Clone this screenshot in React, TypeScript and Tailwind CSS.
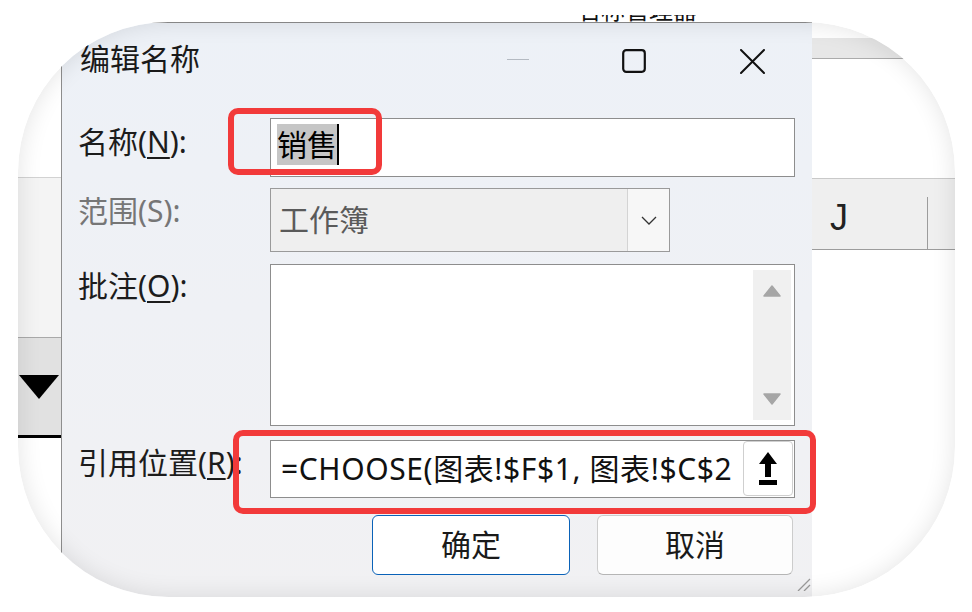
import React from "react";

function MaxIcon() {
  return (
    <svg width="24" height="24" viewBox="0 0 24 24" fill="none">
      <rect x="1.2" y="1.2" width="21.6" height="21.6" rx="3" stroke="#111" strokeWidth="2.2" />
    </svg>
  );
}

function CloseIcon() {
  return (
    <svg width="25" height="25" viewBox="0 0 25 25" fill="none">
      <path d="M1 1L24 24M24 1L1 24" stroke="#111" strokeWidth="2" strokeLinecap="round" />
    </svg>
  );
}

function Chevron() {
  return (
    <svg width="16" height="9" viewBox="0 0 16 9" fill="none">
      <path d="M1 1L8 8L15 1" stroke="#333" strokeWidth="1.3" />
    </svg>
  );
}

function Tri({ up }: { up?: boolean }) {
  return (
    <svg width="18" height="12" viewBox="0 0 18 12">
      {up ? (
        <path d="M9 1L17 11H1Z" fill="#a6a6a6" stroke="#a6a6a6" strokeLinejoin="round" strokeWidth="1.5" />
      ) : (
        <path d="M1 1H17L9 11Z" fill="#a6a6a6" stroke="#a6a6a6" strokeLinejoin="round" strokeWidth="1.5" />
      )}
    </svg>
  );
}

function UploadIcon() {
  return (
    <svg width="20" height="34" viewBox="0 0 20 34">
      <path d="M10 0L19 12H13V25H7V12H1Z" fill="#000" />
      <rect x="1" y="28" width="18" height="5" fill="#000" />
    </svg>
  );
}

function LeftStrip() {
  return (
    <div className="w-[43px] shrink-0 flex flex-col">
      <div className="h-[156px] bg-white border-b border-[#d2d2d2]" />
      <div className="h-[160px] bg-[#f4f4f4] border-b border-[#a9a9a9]" />
      <div className="h-[97px] bg-[#e1e1e1] flex items-center pl-[1px]">
        <svg width="40" height="24" viewBox="0 0 40 24">
          <path d="M0 0H40L20 24Z" fill="#000" />
        </svg>
      </div>
      <div className="h-[3px] bg-black" />
      <div className="flex-1 bg-white" />
    </div>
  );
}

function RightStrip() {
  return (
    <div className="flex-1 flex flex-col">
      <div className="h-[16px] bg-white" />
      <div className="h-[21px] bg-[#e7e7e7] border-b border-[#ababab]" />
      <div className="h-[120px] bg-white border-b border-[#c9c9c9]" />
      <div className="h-[71px] bg-[#efefef] border-b border-[#9c9c9c] flex">
        <div className="w-[115px] pl-[18px] pt-[20px] text-[36px] leading-[38px] text-[#222] font-['Liberation_Sans',sans-serif]">J</div>
        <div className="mt-[18px] w-px bg-[#9c9c9c]" />
      </div>
      <div className="flex-1 bg-white" />
    </div>
  );
}

function Dialog() {
  return (
    <div className="relative w-[751px] shrink-0 h-full border-l border-t border-[#8e8e8e] bg-gradient-to-b from-[#edf1f7] to-[#f1f1f3]">
      {/* title bar */}
      <div className="flex h-[95px]">
        <div className="flex-1 pl-[18px] pt-[18px] text-[30px] leading-[36px] text-[#1a1a1a]">编辑名称</div>
        <div className="flex items-start pt-[26px] pr-[47px]">
          <div className="w-[22px] h-px bg-[#b4bac2] mt-[10px] mr-[93px]" />
          <div className="mr-[94px]">
            <MaxIcon />
          </div>
          <CloseIcon />
        </div>
      </div>

      <div className="pl-[16px] flex flex-col">
        {/* name */}
        <div className="flex">
          <div className="w-[192px] pt-[6px] text-[30px] leading-[36px] text-[#1c1c1c]">
            名称(<span className="underline underline-offset-[4px] decoration-[2px]">N</span>):
          </div>
          <div className="w-[525px] h-[59px] border border-[#8d8d8d] bg-white flex items-start pt-[5px] pl-[6px]">
            <span className="bg-[#c6c6c6] text-[30px] leading-[41px] text-black">销售</span>
            <span className="w-[2px] h-[41px] bg-black" />
          </div>
        </div>

        {/* scope */}
        <div className="flex mt-[11px]">
          <div className="w-[192px] pt-[5px] text-[30px] leading-[36px] text-[#767676]">范围(S):</div>
          <div className="w-[400px] h-[64px] border border-[#9a9a9a] bg-[#efefef] flex">
            <div className="flex-1 pl-[8px] flex items-center text-[30px] leading-[36px] text-[#5a5a5a]">工作簿</div>
            <div className="w-[42px] bg-[#f7f7f7] border-l border-[#d4d4d4] flex items-center justify-center">
              <Chevron />
            </div>
          </div>
        </div>

        {/* comment */}
        <div className="flex mt-[12px]">
          <div className="w-[192px] pt-[4px] text-[30px] leading-[36px] text-[#1c1c1c]">
            批注(<span className="underline underline-offset-[4px] decoration-[2px]">O</span>):
          </div>
          <div className="w-[525px] h-[162px] border border-[#8d8d8d] bg-white flex justify-end pt-[5px] pb-[5px] pr-[3px]">
            <div className="w-[38px] bg-[#f0f0f0] flex flex-col items-center justify-between py-[15px]">
              <Tri up />
              <Tri />
            </div>
          </div>
        </div>

        {/* ref */}
        <div className="flex mt-[14px]">
          <div className="w-[192px] pt-[5px] text-[30px] leading-[36px] text-[#1c1c1c] whitespace-nowrap">
            引用位置(<span className="underline underline-offset-[4px] decoration-[2px]">R</span>):
          </div>
          <div className="w-[525px] h-[58px] border border-[#8d8d8d] bg-white flex items-start">
            <div className="flex-1 h-full overflow-hidden whitespace-nowrap pl-[10px] flex items-center text-[30px] leading-[36px] tracking-[0.6px] text-[#111]">
              =CHOOSE(图表!$F$1, 图表!$C$2
            </div>
            <div className="w-[50px] h-[55px] mr-[1px] bg-white border border-[#cfcfcf] rounded-[4px] flex items-center justify-center">
              <UploadIcon />
            </div>
          </div>
        </div>

        {/* buttons */}
        <div className="flex mt-[17px]">
          <div className="ml-[294px] w-[198px] h-[60px] bg-white border-[1.5px] border-[#0a62b8] rounded-[6px] flex items-center justify-center text-[30px] leading-[36px] text-[#1a1a1a]">
            确定
          </div>
          <div className="ml-[27px] w-[196px] h-[60px] bg-[#fdfdfd] border border-[#cccccc] border-b-[#b5b5b5] rounded-[6px] flex items-center justify-center text-[30px] leading-[36px] text-[#1a1a1a]">
            取消
          </div>
        </div>
      </div>

      {/* red highlight boxes */}
      <div className="absolute left-[166px] top-[85px] w-[154px] h-[67px] border-[6px] border-[#f23a3a] rounded-[10px]" />
      <div className="absolute left-[171px] top-[407px] w-[583px] h-[84px] border-[6px] border-[#f23a3a] rounded-[10px]" />

      {/* resize grip */}
      <svg className="absolute right-[1px] bottom-[6px]" width="16" height="14" viewBox="0 0 16 14">
        <path d="M15 2L3 14M15 8L9 14" stroke="#9a9a9a" strokeWidth="1.3" />
      </svg>
    </div>
  );
}

export default function App() {
  return (
    <div className="relative w-[972px] h-[612px] bg-white overflow-hidden font-['Noto_Sans','Noto_Sans_CJK_SC',sans-serif]">
      <div className="absolute left-[577px] top-[15px] h-[7px] overflow-hidden">
        <div className="text-[24px] leading-[30px] -mt-[20px] text-[#111] whitespace-nowrap">名称管理器</div>
      </div>
      <div className="pl-[18px] pt-[22px]">
        <div className="relative w-[937px] h-[575px] rounded-[150px] overflow-hidden flex bg-white">
          <LeftStrip />
          <Dialog />
          <RightStrip />
          <div className="pointer-events-none absolute inset-0 rounded-[150px] shadow-[inset_0_0_24px_rgba(0,0,0,0.11)]" />
        </div>
      </div>
    </div>
  );
}
